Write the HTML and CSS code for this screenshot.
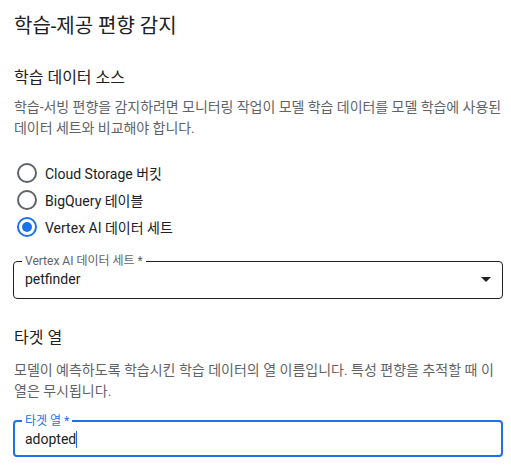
FILE: index.html
```html
<!DOCTYPE html>
<html lang="ko">
<head>
<meta charset="utf-8">
<link rel="stylesheet" href="styles.css">
</head>
<body>
<main class="page">
  <h1 class="title">학습-제공 편향 감지</h1>

  <section class="section">
    <h2 class="heading">학습 데이터 소스</h2>
    <p class="desc">학습-서빙 편향을 감지하려면 모니터링 작업이 모델 학습 데이터를 모델 학습에 사용된 데이터 세트와 비교해야 합니다.</p>
    <div class="radios">
      <label class="radio"><span class="circle"></span><span>Cloud Storage 버킷</span></label>
      <label class="radio"><span class="circle"></span><span>BigQuery 테이블</span></label>
      <label class="radio"><span class="circle checked"></span><span>Vertex AI 데이터 세트</span></label>
    </div>
    <fieldset class="field select">
      <legend class="legend">Vertex AI 데이터 세트 *</legend>
      <div class="value-row">
        <span class="value">petfinder</span>
        <svg class="arrow" width="10" height="5" viewBox="0 0 10 5"><path d="M0 0h10L5 5z" fill="#202124"/></svg>
      </div>
    </fieldset>
  </section>

  <section class="section second">
    <h2 class="heading">타겟 열</h2>
    <p class="desc tight">모델이 예측하도록 학습시킨 학습 데이터의 열 이름입니다. 특성 편향을 추적할 때 이 열은 무시됩니다.</p>
    <fieldset class="field input focused">
      <legend class="legend">타겟 열 *</legend>
      <div class="value-row"><span class="value">adopted</span><span class="caret"></span></div>
    </fieldset>
  </section>
</main>
</body>
</html>
```
FILE: styles.css
```css
* { box-sizing: border-box; }
html, body { margin: 0; background: #fff; }
body {
  font-family: Roboto, "Noto Sans CJK KR", sans-serif;
  color: #202124;
}
.page {
  padding: 12px 8px 0 13px;
}
.title {
  margin: 0 0 0 1px;
  font-size: 20px;
  font-weight: 400;
  line-height: 28px;
}
.section { margin-top: 26px; }
.heading {
  margin: 0 0 0 1px;
  font-size: 16px;
  font-weight: 400;
  line-height: 24px;
}
.desc {
  margin: 7px -6px 0 1px;
  font-size: 14px;
  line-height: 21px;
  letter-spacing: -0.05px;
  color: #5f6368;
}
.radios {
  margin-top: 24px;
  display: flex;
  flex-direction: column;
  gap: 7px;
}
.radio {
  display: flex;
  align-items: center;
  gap: 8px;
  height: 20px;
  padding-left: 4px;
  font-size: 14px;
  color: #202124;
}
.circle {
  width: 20px;
  height: 20px;
  border: 2px solid #5f6368;
  border-radius: 50%;
  display: flex;
  align-items: center;
  justify-content: center;
}
.circle.checked { border-color: #1a73e8; }
.circle.checked::after {
  content: "";
  width: 10px;
  height: 10px;
  border-radius: 50%;
  background: #1a73e8;
}
.field {
  margin: 0;
  border: 1px solid #202124;
  border-radius: 4px;
  padding: 0 11px 0 11px;
  min-width: 0;
}
.select { margin-top: 17px; height: 45px; }
.legend {
  font-size: 12px;
  line-height: 14px;
  color: #5f6368;
  padding: 0 3px;
  margin-left: -3px;
}
.value-row {
  display: flex;
  align-items: center;
  height: 22px;
  font-size: 14px;
  color: #202124;
}
.value { font-size: 14px; }
.arrow { margin-left: auto; margin-right: 0; }
.second { margin-top: 27px; }
.desc.tight { margin: 10px 0 0 1px; letter-spacing: 0; line-height: 21px; }
.input { margin-top: 12px; border: 2px solid #1a73e8; height: 43px; padding: 0 10px; }
.focused .legend { color: #1a73e8; }
.caret {
  width: 1px;
  height: 17px;
  background: #1a73e8;
}
```
